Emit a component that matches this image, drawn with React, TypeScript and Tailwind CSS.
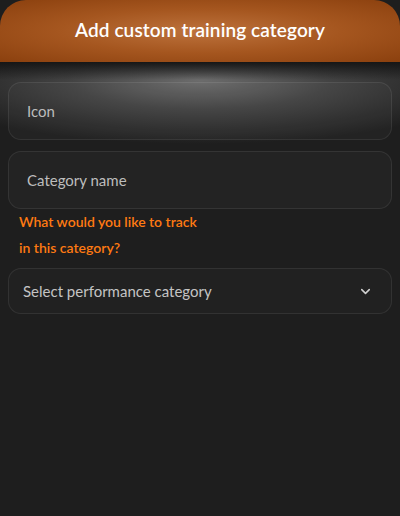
import { ChevronDown } from "lucide-react";

const font = { fontFamily: "'Lato', 'Noto Sans', sans-serif" };

function Field({ label }: { label: string }) {
  return (
    <div className="flex items-center h-[58px] px-[18px] rounded-[13px] border border-[#ffffff14] bg-[#ffffff06]">
      <span className="flex-1 text-[15px] text-[#bdbdbd]">{label}</span>
    </div>
  );
}

export default function App() {
  return (
    <div className="relative w-full h-[516px] overflow-hidden bg-[#1e1e1e]" style={font}>
      {/* spotlight below header */}
      <div className="pointer-events-none absolute left-0 right-0 top-[62px] h-[150px] bg-[radial-gradient(ellipse_290px_64px_at_50%_18px,#6c6c6c_0%,#424242_45%,#1e1e1e00_100%)]" />
      <div className="pointer-events-none absolute left-0 right-0 top-[62px] h-[18px] bg-gradient-to-b from-[#161616] to-transparent" />

      <div className="relative">
        {/* Header */}
        <div className="h-[62px] rounded-t-[26px] bg-[radial-gradient(ellipse_at_center,#bd723c_0%,#a5561f_50%,#8b400e_100%)] flex items-center justify-center">
          <h1 className="text-white text-[19px] font-semibold tracking-[0.1px] -mt-[1px]">
            Add custom training category
          </h1>
        </div>

        {/* Form */}
        <div className="px-2 pt-[20px] flex flex-col">
          <Field label="Icon" />
          <div className="h-[11px]" />
          <Field label="Category name" />
          <p className="mt-0 ml-[11px] text-[14px] leading-[26px] font-semibold text-[#ff7a12]">
            What would you like to track
            <br />
            in this category?
          </p>
          <div className="mt-[7px] flex items-center h-[46px] rounded-[13px] border border-[#ffffff14] bg-[#ffffff04] pl-[14px] pr-[18px]">
            <span className="flex-1 text-[15px] text-[#c4c4c4]">Select performance category</span>
            <ChevronDown className="w-[15px] h-[15px] text-[#d0d0d0]" strokeWidth={2.5} />
          </div>
        </div>
      </div>
    </div>
  );
}
